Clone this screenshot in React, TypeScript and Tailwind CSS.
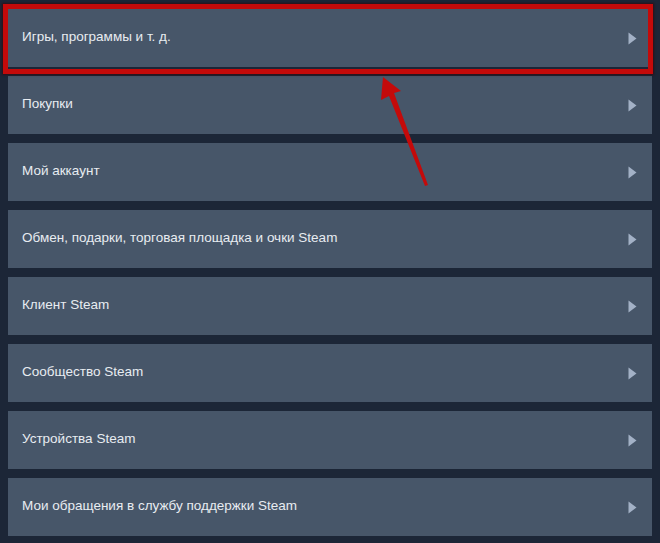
import React from "react";

const topics = [
  "Игры, программы и т. д.",
  "Покупки",
  "Мой аккаунт",
  "Обмен, подарки, торговая площадка и очки Steam",
  "Клиент Steam",
  "Сообщество Steam",
  "Устройства Steam",
  "Мои обращения в службу поддержки Steam",
];

const Chevron: React.FC = () => (
  <svg width="9" height="13" viewBox="0 0 9 13" className="shrink-0">
    <path d="M0.5 0.5 L8.5 6.5 L0.5 12.5 Z" fill="#a3b1c6" />
  </svg>
);

const App: React.FC = () => {
  return (
    <div
      className="relative w-[660px] h-[543px] bg-[#1c2637] overflow-hidden"
      style={{ fontFamily: '"Liberation Sans", Arial, sans-serif' }}
    >
      <div className="flex flex-col gap-[9px] pt-[9px] pl-[8px] pr-[8px]">
        {topics.map((title) => (
          <div
            key={title}
            className="flex items-center justify-between h-[58px] bg-[#475669] pl-[14px] pr-[15px] text-[13.5px] text-[#e8ecf1]"
          >
            <span className="-mt-[1px]">{title}</span>
            <Chevron />
          </div>
        ))}
      </div>

      {/* highlight frame around the first topic */}
      <div className="absolute left-[3px] top-[4px] w-[650px] h-[70px] border-[5px] border-[#c40a0a] shadow-[0_0_2px_1px_rgba(60,0,0,0.6)]" />

      {/* pointer arrow */}
      <svg
        className="absolute left-0 top-0"
        width="660"
        height="543"
        viewBox="0 0 660 543"
      >
        <path
          d="M383 77 L401 91 L394 93 L428 185 L425 186 L389 96 L381 100 Z"
          fill="#c40a0a"
        />
      </svg>
    </div>
  );
};

export default App;
